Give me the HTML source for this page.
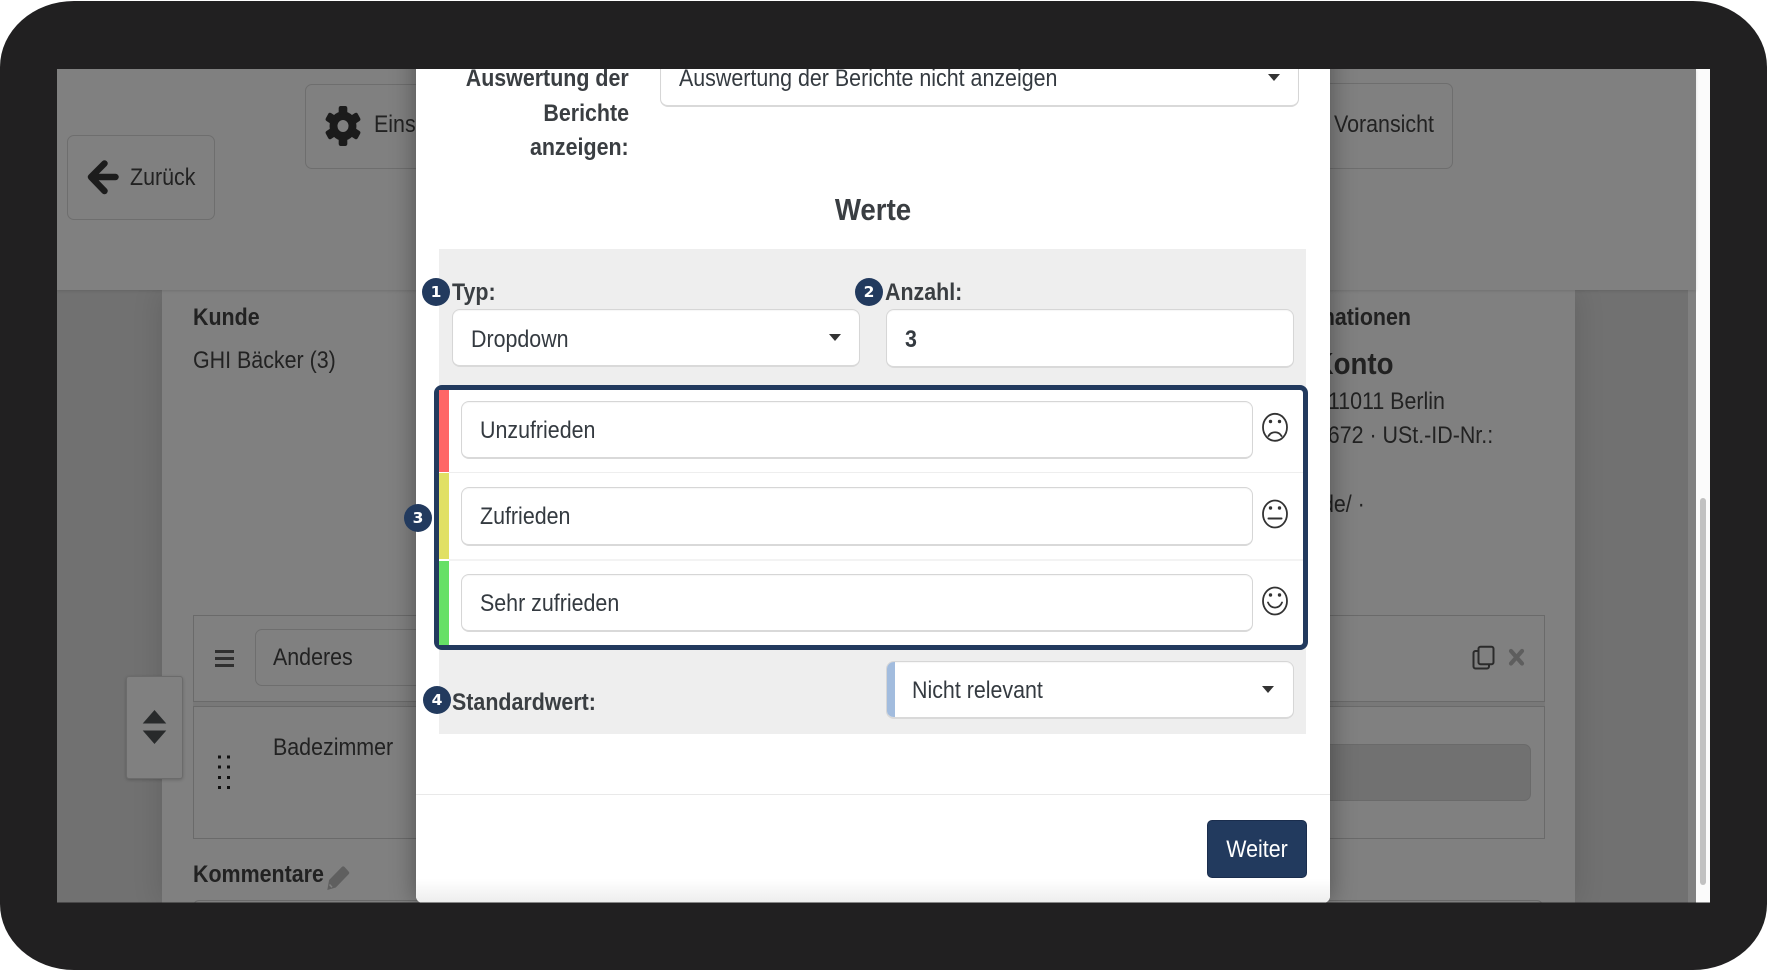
<!DOCTYPE html>
<html><head><meta charset="utf-8"><style>
html,body{margin:0;padding:0;background:#fff}
#p{position:relative;width:1767px;height:971px;overflow:hidden;background:#fff;font-family:"Liberation Sans",sans-serif;font-size:24px;color:#222}
#frame{position:absolute;left:0;top:1px;width:1767px;height:969px;background:#212021;border-radius:74px/66px}
#s{position:absolute;left:0;top:0;width:1767px;height:971px;clip-path:inset(69px 57px 68.5px 57px);filter:blur(.35px)}
.a{position:absolute;box-sizing:border-box}
.t{position:absolute;line-height:0;white-space:nowrap;margin-top:.6px;transform:scaleX(.892);transform-origin:0 50%}
.r{transform-origin:100% 50%}
.g{font-size:31px;margin-top:.2px}
.ctr{transform:translateX(-50%) scaleX(.892);transform-origin:50% 50%}
.b{font-weight:bold}
.bd{position:absolute;width:28px;height:28px;border-radius:50%;background:#223a5e;color:#fff;font:bold 15.5px "DejaVu Sans",sans-serif;display:flex;align-items:center;justify-content:center;z-index:5}
.in{position:absolute;box-sizing:border-box;background:#fff;border:1px solid #d6d6d6;border-bottom:2px solid #d9d9d9;border-radius:8px;box-shadow:inset 0 1px 1px rgba(0,0,0,.04)}
.c{position:absolute;width:0;height:0;border-left:6px solid transparent;border-right:6px solid transparent;border-top:7px solid #333}
.m{color:#343a40}
.l{color:#3a3e42}
</style></head><body><div id="p">
<div id="frame"></div>
<div id="s">
<!-- page background -->
<div class="a" style="left:57px;top:69px;width:1639px;height:834px;background:#717171"></div>
<div class="a" style="left:1688px;top:290px;width:8px;height:613px;background:#808080"></div>
<div class="a" style="left:1696px;top:69px;width:14px;height:834px;background:#fbfbfb"></div>
<div class="a" style="left:1700px;top:498px;width:6px;height:387px;background:#c1c1c1;border-radius:3px"></div>
<div class="a" style="left:162px;top:290px;width:1413px;height:613px;background:#808080;box-shadow:0 0 28px rgba(0,0,0,.14)"></div>
<div class="a" style="left:57px;top:69px;width:1639px;height:221px;background:#808080;box-shadow:0 1px 3px rgba(0,0,0,.12)"></div>

<!-- header buttons -->
<div class="a" style="left:67px;top:135px;width:147.500px;height:85px;border:1px solid #6e6e6e;border-radius:7px"></div>
<svg class="a" style="left:79.500px;top:154px" width="45" height="46" viewBox="80 155 45 46"><path d="M115.5 178H93M104.5 164.5L91 178L104.5 192" fill="none" stroke="#1c1c1c" stroke-width="6.5" stroke-linecap="round" stroke-linejoin="round"/></svg>
<div class="t" style="left:130px;top:177.100px">Zurück</div>
<div class="a" style="left:305px;top:84px;width:160px;height:85px;border:1px solid #6e6e6e;border-radius:7px"></div>
<svg class="a" style="left:320px;top:100px" width="46" height="52" viewBox="-23 -26 46 52"><g fill="#1b1b1b" transform="scale(.92 1)"><circle r="10.3" fill="none" stroke="#1b1b1b" stroke-width="8.6"/><rect x="-4.7" y="-20" width="9.4" height="9" rx="2.2"/><rect x="-4.7" y="-20" width="9.4" height="9" rx="2.2" transform="rotate(60)"/><rect x="-4.7" y="-20" width="9.4" height="9" rx="2.2" transform="rotate(120)"/><rect x="-4.7" y="-20" width="9.4" height="9" rx="2.2" transform="rotate(180)"/><rect x="-4.7" y="-20" width="9.4" height="9" rx="2.2" transform="rotate(240)"/><rect x="-4.7" y="-20" width="9.4" height="9" rx="2.2" transform="rotate(300)"/></g></svg>
<div class="t" style="left:374px;top:124.300px">Einstellungen</div>
<div class="a" style="left:1250px;top:83px;width:203px;height:86px;border:1px solid #6e6e6e;border-radius:7px"></div>
<div class="t" style="left:1334px;top:124.300px">Voransicht</div>

<!-- panel text -->
<div class="t b" style="left:192.500px;top:317.100px">Kunde</div>
<div class="t" style="left:192.500px;top:360.100px">GHI Bäcker (3)</div>
<div class="t b r" style="right:356.500px;top:317.100px">Informationen</div>
<div class="t b r g" style="right:373.500px;top:363.400px">Konto</div>
<div class="t r" style="right:322px;top:401.100px">Musterstraße 1 · 11011 Berlin</div>
<div class="t r" style="right:273.500px;top:435.400px">Tel. 01234 5672 · USt.-ID-Nr.:</div>
<div class="t r" style="right:402.500px;top:504.300px">https://www.example.de/ ·</div>

<!-- block -->
<div class="a" style="left:193px;top:615px;width:1352px;height:87px;border:1px solid #6a6a6a"></div>
<div class="a" style="left:193px;top:702px;width:1352px;height:4px;background:#787878"></div>
<div class="a" style="left:193px;top:706px;width:1352px;height:133px;border:1px solid #6a6a6a"></div>
<div class="a" style="left:215px;top:650px;width:19px;height:3px;background:#303030"></div>
<div class="a" style="left:215px;top:657px;width:19px;height:3px;background:#303030"></div>
<div class="a" style="left:215px;top:664px;width:19px;height:3px;background:#303030"></div>
<div class="a" style="left:255px;top:629px;width:200px;height:57px;border:1px solid #6e6e6e;border-radius:7px"></div>
<div class="t" style="left:273px;top:657.500px">Anderes</div>
<div class="t" style="left:273px;top:747.600px">Badezimmer</div>
<svg class="a" style="left:216px;top:753px" width="16" height="38"><g fill="#111"><rect x="2" y="2.5" width="3" height="3"/><rect x="11" y="2.5" width="3" height="3"/><rect x="2" y="12.5" width="3" height="3"/><rect x="11" y="12.5" width="3" height="3"/><rect x="2" y="23" width="3" height="3"/><rect x="11" y="23" width="3" height="3"/><rect x="2" y="33" width="3" height="3"/><rect x="11" y="33" width="3" height="3"/></g></svg>
<div class="a" style="left:1280px;top:744px;width:251px;height:57px;background:#717171;border:1px solid #6a6a6a;border-radius:7px"></div>
<svg class="a" style="left:1470px;top:643px" width="58" height="30" viewBox="1470 643 58 30"><path d="M1478 651h-2.500a2 2 0 0 0-2 2v13.500a2 2 0 0 0 2 2h11.500a2 2 0 0 0 2-2V664" fill="none" stroke="#2b2b2b" stroke-width="2"/><rect x="1478.500" y="646.700" width="15" height="17.500" rx="2" fill="none" stroke="#2b2b2b" stroke-width="2"/><path d="M1511 651L1522 663.500M1522 651L1511 663.500" stroke="#5e5e5e" stroke-width="4.200" stroke-linecap="round"/></svg>
<div class="t b" style="left:192.500px;top:874.800px">Kommentare</div>
<svg class="a" style="left:325px;top:864px" width="26" height="28" viewBox="325 864 26 28"><path d="M327.300 890l1.800-10 12.700-13a2 2 0 0 1 2.800 0l4 4.500a2 2 0 0 1 0 2.800L335.800 887.500z" fill="#5f5f5f"/><path d="M329.500 884.500l2.500 2.800" stroke="#808080" stroke-width="1.500"/></svg>
<div class="a" style="left:193px;top:900px;width:1350px;height:20px;border:1px solid #6a6a6a;border-radius:6px"></div>
<div class="a" style="left:126px;top:676px;width:57px;height:103px;background:#808080;border:1px solid #6b6b6b;border-radius:3px;box-shadow:0 1px 3px rgba(0,0,0,.2)"></div>
<svg class="a" style="left:140px;top:708px" width="30" height="38" viewBox="140 708 30 38"><path d="M142.700 723.500L154.500 710L166.300 723.500zM142.700 730.500L154.500 744L166.300 730.500z" fill="#282a2b"/></svg>

<!-- modal -->
<div class="a" style="left:416px;top:40px;width:913.500px;height:862.500px;background:#fff;border-radius:0 0 7px 7px;box-shadow:0 0 26px rgba(0,0,0,.38)">
<div class="a" style="left:0;right:0;bottom:0;height:24px;background:linear-gradient(#fff,#ededed);border-radius:0 0 7px 7px"></div>
</div>
<div class="t b l r" style="right:1138px;top:78.700px">Auswertung der</div>
<div class="t b l r" style="right:1138px;top:113.200px">Berichte</div>
<div class="t b l r" style="right:1138px;top:147.700px">anzeigen:</div>
<div class="in" style="left:660px;top:40px;width:639px;height:66.500px"></div>
<div class="t m" style="left:678.500px;top:78.200px">Auswertung der Berichte nicht anzeigen</div>
<div class="c" style="left:1268px;top:74px"></div>
<div class="t b l ctr g" style="left:872.500px;top:210.200px">Werte</div>

<div class="a" style="left:439px;top:249px;width:867px;height:485px;background:#eee"></div>
<div class="t b l" style="left:452.300px;top:292.600px">Typ:</div>
<div class="t b l" style="left:885px;top:292.600px">Anzahl:</div>
<div class="in" style="left:451.500px;top:309px;width:408.500px;height:58px"></div>
<div class="t m" style="left:470.800px;top:339px">Dropdown</div>
<div class="c" style="left:829px;top:334px"></div>
<div class="in" style="left:886px;top:309px;width:408px;height:59px"></div>
<div class="t b m" style="left:904.500px;top:339px">3</div>

<div class="a" style="left:434px;top:385px;width:874px;height:265px;background:#fff;border:5px solid #223a5e;border-radius:8px"></div>
<div class="a" style="left:439px;top:390px;width:10px;height:82px;background:#ff6666"></div>
<div class="a" style="left:439px;top:473px;width:10px;height:86px;background:#e1e064"></div>
<div class="a" style="left:439px;top:561px;width:10px;height:84px;background:#66e066"></div>
<div class="a" style="left:449px;top:472px;width:854px;height:1px;background:#eee"></div>
<div class="a" style="left:449px;top:559px;width:854px;height:2px;background:#f3f3f3"></div>
<div class="in" style="left:461px;top:401px;width:792px;height:58px"></div>
<div class="in" style="left:461px;top:487px;width:792px;height:59px"></div>
<div class="in" style="left:461px;top:574px;width:792px;height:58px"></div>
<div class="t m" style="left:479.800px;top:430.100px">Unzufrieden</div>
<div class="t m" style="left:480px;top:516.900px">Zufrieden</div>
<div class="t m" style="left:479.800px;top:603.600px">Sehr zufrieden</div>
<svg class="a" style="left:1260px;top:410px" width="30" height="210" viewBox="1260 410 30 210"><g fill="none" stroke="#333" stroke-width="1.800" stroke-linecap="round"><ellipse cx="1275" cy="427.300" rx="12" ry="13.500"/><path d="M1268.500 436a7.500 7.500 0 0 1 13 0"/><ellipse cx="1275" cy="514" rx="12" ry="13.500"/><path d="M1268.500 518.500h13" stroke-width="2"/><ellipse cx="1275" cy="601" rx="12" ry="13.500"/><path d="M1268 602.500a7.500 8 0 0 0 14 0"/></g><g fill="#333"><circle cx="1270.500" cy="421.500" r="1.700"/><circle cx="1279.500" cy="421.500" r="1.700"/><circle cx="1270.500" cy="508" r="1.700"/><circle cx="1279.500" cy="508" r="1.700"/><circle cx="1270.500" cy="595" r="1.700"/><circle cx="1279.500" cy="595" r="1.700"/></g></svg>

<div class="t b l" style="left:452px;top:702.600px">Standardwert:</div>
<div class="in" style="left:886px;top:661px;width:408px;height:58px;overflow:hidden"><div class="a" style="left:0;top:0;width:8px;height:100%;background:#a2bcde"></div></div>
<div class="t m" style="left:912px;top:690.300px">Nicht relevant</div>
<div class="c" style="left:1262px;top:686px"></div>

<div class="a" style="left:416px;top:794px;width:913.500px;height:1px;background:#e9e9e9"></div>
<div class="a" style="left:1206.700px;top:820px;width:100px;height:58px;background:#223a5e;border:1px solid #1a2d4d;border-radius:5px"></div>
<div class="t ctr" style="left:1257px;top:849.800px;color:#fff">Weiter</div>

<div class="bd" style="left:422px;top:278px">1</div>
<div class="bd" style="left:855px;top:278px">2</div>
<div class="bd" style="left:404px;top:504px">3</div>
<div class="bd" style="left:423px;top:686px">4</div>
</div>
</div></body></html>
